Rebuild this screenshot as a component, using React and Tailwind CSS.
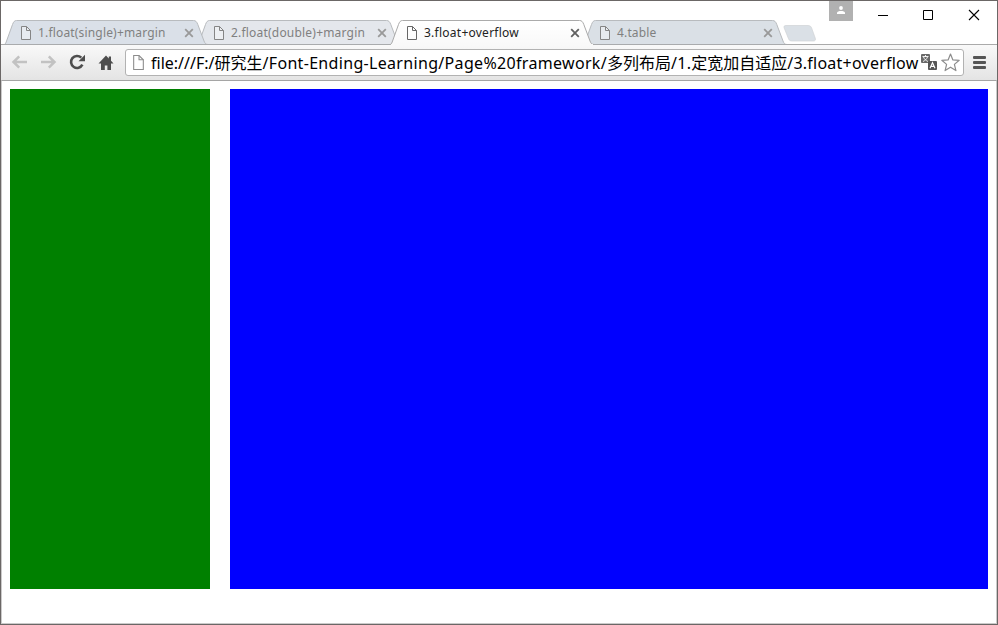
import React from "react";

const TABS = [
  { title: "1.float(single)+margin", layer: "z-[2]", fill: "#dae0e8", text: "text-[#808080] tracking-[0.17px]" },
  { title: "2.float(double)+margin", layer: "z-[1]", fill: "#e4e7ec", text: "text-[#808080] tracking-[0.2px]" },
  { title: "3.float+overflow", layer: "z-[3]", fill: "url(#activeTab)", text: "text-[#222] tracking-[0.25px]", active: true },
  { title: "4.table", layer: "z-[2]", fill: "#dae0e6", text: "text-[#808080] tracking-[0.15px]" },
];

function PageIcon({ className, color = "#777" }) {
  return (
    <svg className={className} width="12" height="14" viewBox="0 0 12 14" fill="white" fillOpacity=".35" stroke={color}>
      <path d="M1.5.5h5l4 4v9h-9z" />
      <path d="M6.5.5v4h4" fill="none" />
    </svg>
  );
}

function Tab({ tab }) {
  return (
    <div className={`relative h-[25px] w-[205px] -mr-3 shrink-0 ${tab.layer}`}>
      <svg className="absolute inset-0" width="205" height="25" viewBox="0 0 205 25">
        <defs>
          <linearGradient id="activeTab" x1="0" y1="0" x2="0" y2="1">
            <stop offset="0" stopColor="#fff" />
            <stop offset="1" stopColor="#f9f9f9" />
          </linearGradient>
        </defs>
        <path
          d="M0 24.5C1 24.5 1.600 23.500 2.200 22L8.500 4.500C9.500 1.800 10.500.5 12.500.5H189.500C191.700.5 192.800 1.800 193.800 4.500L200 21C200.900 23.500 202 24.500 204 24.500"
          fill={tab.fill}
          stroke={tab.active ? "#aaa" : "#b8bbbe"}
        />
        {tab.active ? <path d="M1 24.5H203" stroke="#f9f9f9" /> : <path d="M0 24.5H205" stroke="#a9abad" />}
      </svg>
      <div className="relative flex h-[25px] items-center pl-4">
        <PageIcon color={tab.active ? "#666" : "#858585"} />
        <span className={`ml-1.5 w-[146px] whitespace-nowrap text-[12px] leading-[24px] ${tab.text}`}>{tab.title}</span>
        <svg width="10" height="10" viewBox="0 0 10 10" stroke={tab.active ? "#606060" : "#999"} strokeWidth="1.800">
          <path d="M1.200 1.200l7.600 7.600M8.800 1.200L1.200 8.800" />
        </svg>
      </div>
    </div>
  );
}

function TitleBar() {
  return (
    <div className="flex h-[19px] shrink-0 items-start justify-end">
      <div className="flex h-5 w-6 shrink-0 justify-center bg-[#b1b1b1] pt-[5px]">
        <svg width="8" height="8" viewBox="0 0 8 8" fill="white">
          <circle cx="4" cy="2" r="1.900" />
          <path d="M0 8V6.800C0 5.500 2 4.900 4 4.900s4 .6 4 1.900V8z" />
        </svg>
      </div>
      <svg className="ml-6 shrink-0" width="120" height="28" viewBox="0 0 120 28" stroke="black" fill="none">
        <path d="M1 14.500h10" />
        <path d="M46.500 9.500h9v9h-9z" />
        <path d="M92 9l10 10M102 9L92 19" strokeWidth="1.100" />
      </svg>
    </div>
  );
}

function Toolbar() {
  return (
    <div className="flex h-[35px] shrink-0 items-center bg-linear-to-b from-[#f9f9f9] to-[#e4e4e4] pl-2.5 pr-2">
      <svg className="mb-px" width="17" height="14" viewBox="0 0 17 14" fill="none" stroke="#c2c2c2" strokeWidth="2.500">
        <path d="M2.500 7H16M8.200 1.300L2.500 7l5.700 5.700" />
      </svg>
      <svg className="mb-px ml-3" width="17" height="14" viewBox="0 0 17 14" fill="none" stroke="#c2c2c2" strokeWidth="2.500">
        <path d="M14.500 7H1M8.800 1.300L14.500 7l-5.700 5.700" />
      </svg>
      <svg className="mb-px ml-3" width="17" height="16" viewBox="0 0 17 16">
        <path d="M13.400 10.700A6 6 0 1 1 12.300 3.700" fill="none" stroke="#4e4e4e" strokeWidth="2.600" />
        <path d="M16 .8V7.200H9.500z" fill="#4e4e4e" />
      </svg>
      <svg className="ml-3" width="16" height="16" viewBox="0 0 16 16" fill="#4e4e4e">
        <path d="M8 .5L.5 8.400H3V15h3.800v-4.600h2.600V15H13V8.400h2.500L13 5.700V1.500h-2.200v2.100z" />
      </svg>
      <div className="ml-[11px] flex h-[27px] w-[839px] shrink-0 items-center rounded-[3px] border border-[#b2b2b2] bg-white">
        <PageIcon className="ml-1.5 h-[15px] w-[13px] shrink-0" color="#8c8c8c" />
        <div className="ml-1.5 w-[768px] shrink-0 whitespace-nowrap pt-0.5 text-[16px] leading-[23px] text-black">
          file:///F:/研究生
          <span className="tracking-[0.32px]">/Font-Ending-Learning/Page%20framework/</span>
          多列布局
          <span className="tracking-[0.3px]">/1.</span>
          定宽加自适应
          <span className="tracking-[0.23px]">/3.float+overflow</span>
        </div>
        <svg className="mb-px ml-0.5 shrink-0" width="17" height="17" viewBox="0 0 17 17">
          <rect x="0" y="0" width="9" height="9" rx="1" fill="#686868" />
          <path d="M1.500 2.500h6M4.500 1v1.500M2.500 3c1 2.500 2.500 3.500 4.500 4.500M6.500 3C5.500 5.500 4 6.500 2 7.500" fill="none" stroke="white" strokeWidth=".9" />
          <rect x="7" y="7" width="9" height="9" rx="1" fill="#555" />
          <path d="M9 14.200l2.500-5.500 2.500 5.500M9.900 12.400h3.200" fill="none" stroke="white" strokeWidth="1.100" />
        </svg>
        <svg className="ml-[3px] shrink-0" width="19" height="19" viewBox="0 0 19 19" fill="white" stroke="#8c8c8c" strokeWidth="1.200" strokeLinejoin="round">
          <path d="M9.500 1l2.400 5.900 6.300.4-4.800 4.100 1.500 6.200-5.400-3.400-5.400 3.400 1.500-6.200L.8 7.300l6.300-.4z" />
        </svg>
      </div>
      <svg className="mb-px ml-[9px] shrink-0" width="13" height="13" viewBox="0 0 13 13" fill="#555">
        <rect width="13" height="3" rx="1" />
        <rect y="5" width="13" height="3" rx="1" />
        <rect y="10" width="13" height="3" rx="1" />
      </svg>
    </div>
  );
}

export default function App() {
  return (
    <div className="flex h-[625px] w-[998px] flex-col overflow-hidden border border-[#6b6766] bg-white font-['Noto_Sans','Noto_Sans_CJK_SC',sans-serif]">
      <TitleBar />
      <div className="flex h-[25px] shrink-0 items-start bg-[linear-gradient(to_top,#aaa_1px,transparent_1px)] pl-[3px]">
        {TABS.map((tab) => (
          <Tab key={tab.title} tab={tab} />
        ))}
        <svg className="ml-[7px] mt-[5px] shrink-0" width="33" height="17" viewBox="0 0 33 17">
          <path d="M3 .5h22c2 0 3 .8 3.700 2.700l3.500 9.800c.8 2-.1 3-2 3H9c-2 0-3-.8-3.700-2.800L1.200 3C.6 1.300 1.200.5 3 .5z" fill="#dae0e6" stroke="#d0d3d6" strokeWidth=".7" />
        </svg>
      </div>
      <Toolbar />
      <main className="flex grow gap-5 border-x border-b border-t border-x-[#cbcaca] border-b-[#cbcaca] border-t-[#a5a5a5] px-2 pt-2">
        <div className="h-[500px] w-[200px] bg-[#008000]" />
        <div className="h-[500px] w-[758px] bg-[#0000ff]" />
      </main>
    </div>
  );
}
